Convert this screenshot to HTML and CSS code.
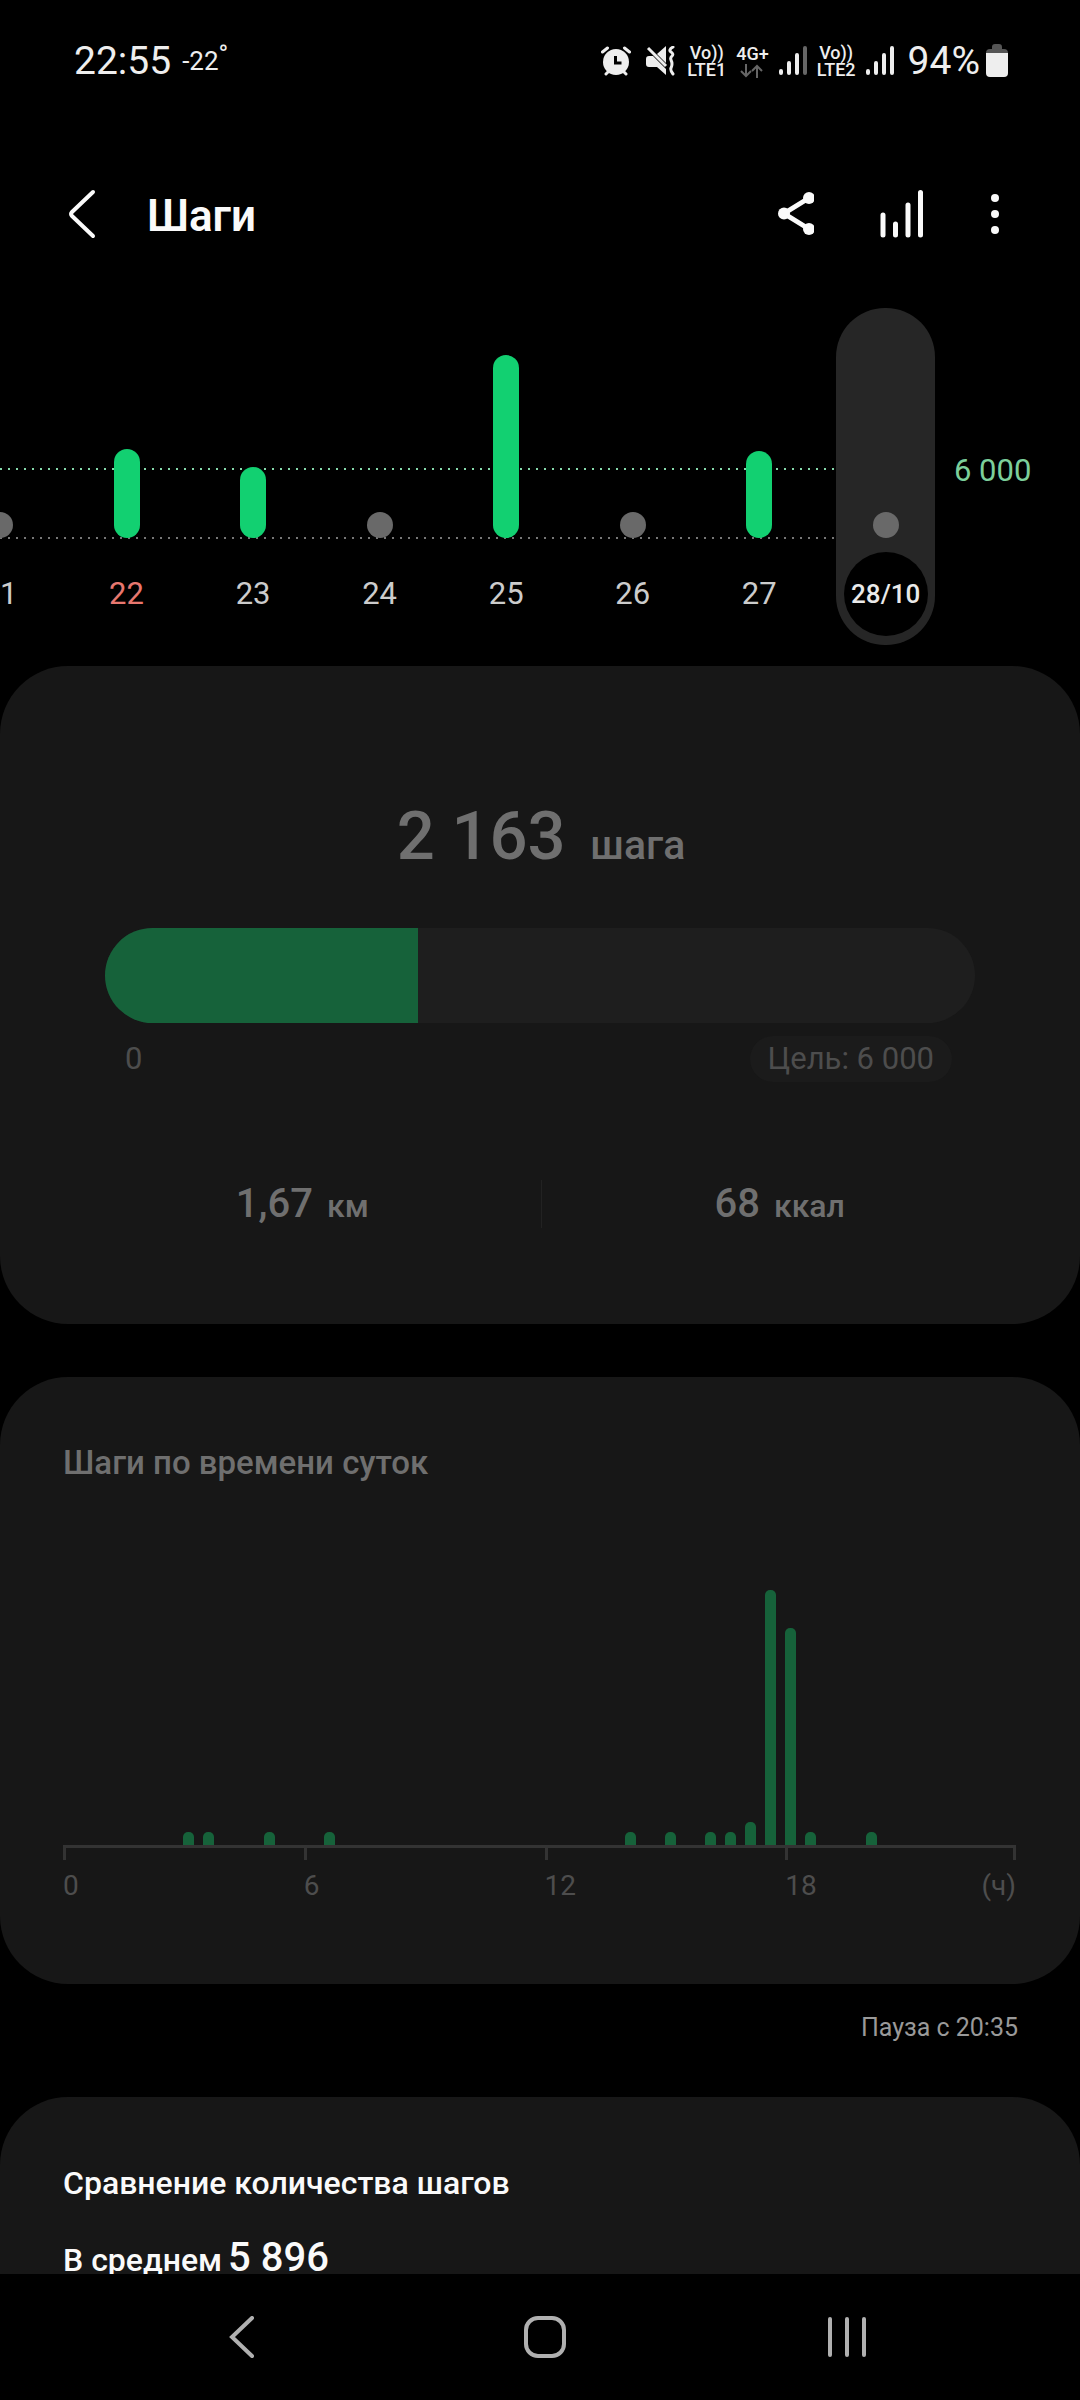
FILE: index.html
```html
<!DOCTYPE html>
<html lang="ru">
<head>
  <meta charset="utf-8">
  <meta name="viewport" content="width=device-width, initial-scale=1">
  <title>Шаги</title>
  <link rel="stylesheet" href="styles.css">
</head>
<body>
  <!-- Status bar -->
  <div class="status-bar">
    <span class="clock">22:55</span>
    <span class="temperature">-22<sup>°</sup></span>

    <div class="status-icons">
      <svg class="icon-alarm" width="30" height="30" viewBox="0 0 30 30">
        <circle cx="15" cy="16" r="13" fill="#eee"/>
        <path d="M1.500 6 6.500 2M28.500 6 23.500 2M5 28 8 25M25 28 22 25" stroke="#eee" stroke-width="3" stroke-linecap="round"/>
        <path d="M14.500 10v7h6" fill="none" stroke="#000" stroke-width="3"/>
      </svg>
      <svg class="icon-mute" width="30" height="30" viewBox="0 0 30 30">
        <path d="M20 0v17L11 8zM3 10h4l13 13v6l-9-8H3q-3 0-3-3v-5q0-3 3-3z" fill="#eee"/>
        <path d="M2 2 20 20" stroke="#eee" stroke-width="3"/>
        <path d="M27 1q-5 3-2 5t1 4-1 4 1 4-1 4 2 6" fill="none" stroke="#eee" stroke-width="3" stroke-linecap="round"/>
      </svg>
      <span class="network">Vo))<br>LTE1</span>
      <span class="network">4G+
        <svg width="24" height="14" viewBox="0 0 24 14" fill="none" stroke="#666" stroke-width="2">
          <path d="M6 0v12M1 7l5 5 5-5M17 14V2M12 7l5-5 5 5"/>
        </svg>
      </span>
      <svg class="icon-signal" width="28" height="30" viewBox="0 0 28 30" stroke="#eee" stroke-width="4" stroke-linecap="round">
        <path d="M2 25v2M10 17v10M18 9v18"/>
        <path d="M26 2v25" stroke="#666"/>
      </svg>
      <span class="network">Vo))<br>LTE2</span>
      <svg class="icon-signal" width="28" height="30" viewBox="0 0 28 30" stroke="#eee" stroke-width="4" stroke-linecap="round">
        <path d="M2 25v2M10 17v10M18 9v18M26 2v25"/>
      </svg>
      <span class="battery-level">94%</span>
      <svg width="22" height="34" viewBox="0 0 22 34">
        <path d="M6 3q0-3 3-3h4q3 0 3 3v2h2q4 0 4 4H0q0-4 4-4h2z" fill="#555"/>
        <path d="M0 9h22v20q0 4-4 4H4q-4 0-4-4z" fill="#eee"/>
      </svg>
    </div>
  </div>

  <!-- App bar -->
  <header class="app-bar">
    <button class="icon-btn" aria-label="Назад">
      <svg width="28" height="50" viewBox="0 0 28 50" fill="none" stroke="#fafafa" stroke-width="4" stroke-linecap="round" stroke-linejoin="round">
        <path d="M25 3 4 23q-2 2 0 4L25 47"/>
      </svg>
    </button>
    <h1>Шаги</h1>
    <div class="actions">
      <button class="icon-btn" aria-label="Поделиться">
        <svg width="44" height="48" viewBox="-7 0 44 48" fill="#fafafa">
          <path d="M32 8 7 23.500 32 39" fill="none" stroke="#fafafa" stroke-width="5"/>
          <circle cx="7" cy="23.500" r="6"/>
          <circle cx="32" cy="8" r="6"/>
          <circle cx="32" cy="39" r="6"/>
        </svg>
      </button>
      <button class="icon-btn" aria-label="Статистика">
        <svg width="44" height="48" viewBox="0 0 44 48" stroke="#fafafa" stroke-width="5" stroke-linecap="round">
          <path d="M3 25v20M15.500 34v11M28 15v30M40.500 2.500V45"/>
        </svg>
      </button>
      <button class="icon-btn" aria-label="Ещё">
        <svg width="10" height="48" viewBox="0 0 10 48" fill="#fafafa">
          <circle cx="5" cy="8" r="4"/>
          <circle cx="5" cy="24" r="4"/>
          <circle cx="5" cy="40" r="4"/>
        </svg>
      </button>
    </div>
  </header>

  <main class="content">
    <!-- Days -->
    <section class="week">
      <div class="days">
        <div class="grid-line goal-line"></div>
        <div class="grid-line base-line"></div>
        <button class="day"><span class="plot"><span class="dot"></span></span><span class="date">21</span></button>
        <button class="day holiday"><span class="plot"><span class="bar" style="height: 89px"></span></span><span class="date">22</span></button>
        <button class="day"><span class="plot"><span class="bar" style="height: 71px"></span></span><span class="date">23</span></button>
        <button class="day"><span class="plot"><span class="dot"></span></span><span class="date">24</span></button>
        <button class="day"><span class="plot"><span class="bar" style="height: 183px"></span></span><span class="date">25</span></button>
        <button class="day"><span class="plot"><span class="dot"></span></span><span class="date">26</span></button>
        <button class="day"><span class="plot"><span class="bar" style="height: 87px"></span></span><span class="date">27</span></button>
        <button class="day selected"><span class="plot"><span class="dot"></span></span><span class="date">28/10</span></button>
      </div>
      <div class="goal-label">6 000</div>
    </section>

    <!-- Today -->
    <section class="card summary">
      <div class="total">2 163 <span class="unit">шага</span></div>
      <div class="progress"><div class="progress-fill" style="width: 36%"></div></div>
      <div class="range">
        <span>0</span>
        <span class="goal">Цель: 6 000</span>
      </div>
      <div class="stats">
        <div class="stat">1,67 <span class="unit">км</span></div>
        <div class="stat">68 <span class="unit">ккал</span></div>
      </div>
    </section>

    <!-- Steps by time of day, one slot for each half hour -->
    <section class="card hourly">
      <h2>Шаги по времени суток</h2>
      <div class="hour-plot">
        <span class="hour-bar" style="grid-column: 7; height: 5%"></span>
        <span class="hour-bar" style="grid-column: 8; height: 5%"></span>
        <span class="hour-bar" style="grid-column: 11; height: 5%"></span>
        <span class="hour-bar" style="grid-column: 14; height: 5%"></span>
        <span class="hour-bar" style="grid-column: 29; height: 5%"></span>
        <span class="hour-bar" style="grid-column: 31; height: 5%"></span>
        <span class="hour-bar" style="grid-column: 33; height: 5%"></span>
        <span class="hour-bar" style="grid-column: 34; height: 5%"></span>
        <span class="hour-bar" style="grid-column: 35; height: 9%"></span>
        <span class="hour-bar" style="grid-column: 36; height: 100%"></span>
        <span class="hour-bar" style="grid-column: 37; height: 85%"></span>
        <span class="hour-bar" style="grid-column: 38; height: 5%"></span>
        <span class="hour-bar" style="grid-column: 41; height: 5%"></span>
      </div>
      <div class="hour-axis">
        <span>0</span>
        <span>6</span>
        <span>12</span>
        <span>18</span>
        <span class="axis-end">(ч)</span>
      </div>
    </section>

    <p class="pause">Пауза с 20:35</p>

    <!-- Comparison -->
    <section class="card compare">
      <h2>Сравнение количества шагов</h2>
      <p class="average">В среднем <strong>5 896</strong></p>
    </section>
  </main>

  <!-- System navigation -->
  <nav class="nav-bar">
    <button class="icon-btn" aria-label="Назад">
      <svg width="42" height="42" viewBox="0 0 42 42" fill="none" stroke="#b0b0b0" stroke-width="4" stroke-linecap="round">
        <path d="M31 2 11 21l20 19"/>
      </svg>
    </button>
    <button class="icon-btn" aria-label="Домой">
      <svg width="42" height="42" viewBox="0 0 42 42" fill="none" stroke="#b0b0b0" stroke-width="4">
        <rect x="2" y="2" width="38" height="38" rx="12"/>
      </svg>
    </button>
    <button class="icon-btn" aria-label="Недавние">
      <svg width="42" height="42" viewBox="0 0 42 42" stroke="#b0b0b0" stroke-width="4" stroke-linecap="round">
        <path d="M4 3v36M21 3v36M38 3v36"/>
      </svg>
    </button>
  </nav>
</body>
</html>
```
FILE: styles.css
```css
* { box-sizing: border-box; }

body {
  display: flex;
  flex-direction: column;
  height: 100vh;
  margin: 0;
  background: #000;
  color: #fafafa;
  font-family: Roboto, "Liberation Sans", sans-serif;
  font-size: 31px;
}

button {
  padding: 0;
  border: none;
  background: none;
  color: inherit;
  font: inherit;
  cursor: pointer;
}

svg {
  display: block;
}

h1, h2, p {
  margin: 0;
}

h2 {
  font-size: 32px;
  font-weight: 500;
  line-height: 44px;
}

/* Status bar */
.status-bar {
  display: flex;
  flex: none;
  align-items: center;
  height: 120px;
  padding: 2px 72px 0 74px;
  color: #eee;
}

.clock, .battery-level {
  font-size: 39px;
}

.temperature {
  margin-left: 11px;
  font-size: 26px;
}

.temperature sup {
  line-height: 0;
  font-size: 26px;
  vertical-align: 7px;
}

.status-icons {
  display: flex;
  align-items: center;
  gap: 10px;
  margin-left: auto;
}

.icon-mute {
  margin: 0 1px 0 5px;
}

.network {
  font-size: 18px;
  font-weight: 500;
  line-height: 17px;
  text-align: center;
}

.network svg {
  margin: 2px auto 0;
}

.battery-level {
  margin: 0 -4px 0 4px;
}

/* App bar */
.app-bar {
  display: flex;
  flex: none;
  align-items: center;
  height: 188px;
  padding: 0 80px 0 68px;
}

.app-bar h1 {
  margin-left: 51px;
  padding-top: 3px;
  font-size: 44px;
  font-weight: 600;
}

.actions {
  display: flex;
  gap: 66px;
  margin-left: auto;
}

/* Scrolling content */
.content {
  flex: 1;
  min-height: 0;
  overflow-y: auto;
  scrollbar-width: none;
}

/* Days */
.week {
  display: flex;
}

.days {
  position: relative;
  display: flex;
  flex: 1;
  justify-content: flex-end;
  min-width: 0;
  overflow: hidden;
}

.grid-line {
  position: absolute;
  left: 0;
  right: 64px;
  height: 2px;
}

.goal-line {
  top: 160px;
  background: repeating-linear-gradient(90deg, #86d9ac 0 2px, transparent 2px 8px);
}

.base-line {
  top: 229px;
  background: repeating-linear-gradient(90deg, #777 0 2px, transparent 2px 8px);
}

.day {
  position: relative;
  display: flex;
  flex: 0 0 calc(100% / 7.5 - 28px);
  flex-direction: column;
  align-items: center;
  gap: 14px;
  margin: 0 14px;
  padding-bottom: 9px;
  border-radius: 49px;
  color: #ccc;
}

.plot {
  display: flex;
  align-items: flex-end;
  height: 230px;
}

.bar, .dot {
  width: 26px;
  border-radius: 13px;
}

.bar {
  background: #12d071;
}

.dot {
  height: 26px;
  background: #696969;
}

.date {
  width: 84px;
  height: 84px;
  border-radius: 50%;
  line-height: 84px;
  text-align: center;
}

.holiday .date {
  color: #e8776f;
}

.selected {
  background: #262626;
}

.selected .date {
  background: #000;
  color: #eaeaea;
  font-size: 26px;
  font-weight: 500;
}

.goal-label {
  flex: 0 0 131px;
  padding: 143px 0 0 5px;
  color: #7ccf9b;
  line-height: 40px;
}

/* Cards */
.card {
  padding: 64px 64px 64px 63px;
  border-radius: 68px;
  background: #171717;
}

.summary {
  margin-top: 21px;
  padding: 130px 62px 96px 64px;
  color: #6f6f6f;
}

.total {
  font-size: 67px;
  font-weight: 500;
  line-height: 80px;
  text-align: center;
}

.unit {
  line-height: 1;
}

.total .unit {
  margin-left: 8px;
  font-size: 41px;
}

.progress {
  height: 95px;
  margin: 52px 43px 13px 41px;
  border-radius: 48px;
  background: #1e1e1e;
  overflow: hidden;
}

.progress-fill {
  height: 100%;
  background: #16623a;
}

.range {
  display: flex;
  justify-content: space-between;
  margin: 0 66px 0 61px;
  color: #4d4d4d;
  line-height: 46px;
}

.goal {
  padding: 0 18px;
  border-radius: 23px;
  background: #1b1b1b;
}

.stats {
  display: flex;
  margin-top: 98px;
}

.stat {
  flex: 1;
  font-size: 40px;
  font-weight: 500;
  line-height: 48px;
  text-align: center;
}

.stat + .stat {
  border-left: 1px solid #222;
}

.stat .unit {
  margin-left: 4px;
  font-size: 32px;
}

/* Steps by time of day */
.hourly {
  margin-top: 53px;
  padding-bottom: 80px;
}

.hourly h2 {
  color: #6f6f6f;
  font-size: 33px;
}

.hour-plot {
  display: grid;
  grid-template-columns: repeat(47, 2fr) 1fr;
  align-items: end;
  height: 255px;
  margin-top: 105px;
}

.hour-bar {
  grid-row: 1;
  width: 11px;
  border-radius: 5px 5px 0 0;
  background: #16623a;
}

.hour-axis {
  display: grid;
  grid-template-columns: 24fr 24fr 24fr 23fr;
  border-top: 3px solid #333;
  color: #4d4d4d;
  font-size: 28px;
  line-height: 36px;
}

.hour-axis span {
  grid-row: 1;
}

.hour-axis span::before {
  content: '';
  display: block;
  width: 3px;
  height: 12px;
  margin-bottom: 8px;
  background: #333;
}

.hour-axis span:nth-child(4) {
  grid-column: 4;
}

.hour-axis .axis-end {
  grid-column: 4;
  justify-self: end;
}

.hour-axis .axis-end::before {
  margin-left: auto;
}

.pause {
  margin: 26px 62px 51px;
  color: #999;
  font-size: 25px;
  line-height: 36px;
  text-align: right;
}

/* Comparison */
.average {
  display: flex;
  align-items: baseline;
  gap: 6px;
  margin-top: 29px;
  font-size: 32px;
  font-weight: 500;
  line-height: 48px;
}

.average strong {
  font-size: 40px;
  font-weight: 500;
}

/* System navigation */
.nav-bar {
  display: flex;
  flex: none;
  align-items: center;
  justify-content: space-between;
  height: 126px;
  padding: 0 212px 0 221px;
}
```
